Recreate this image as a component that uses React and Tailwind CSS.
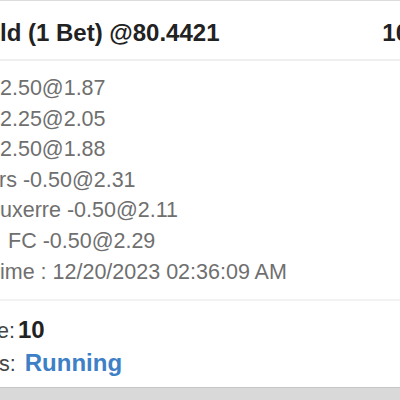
export default function App() {
  const lines = [
    { t: "2.50@1.87", ml: "ml-0" },
    { t: "2.25@2.05", ml: "ml-0" },
    { t: "2.50@1.88", ml: "ml-0" },
    { t: "rs -0.50@2.31", ml: "-ml-[1px]" },
    { t: "uxerre -0.50@2.11", ml: "ml-0" },
    { t: "FC -0.50@2.29", ml: "ml-[8px]" },
    { t: "ime : 12/20/2023 02:36:09 AM", ml: "ml-0" },
  ];
  return (
    <div
      className="w-[400px] h-[400px] overflow-hidden bg-[#d9d9d9]"
      style={{ fontFamily: '"Liberation Sans", Arial, sans-serif' }}
    >
      <div className="w-[417px] bg-white border-t border-[#dcdcdc] border-b border-b-[#c6c6c6]">
        <div className="h-[60px] pt-[6px] flex items-center justify-between pr-[8px] border-b-2 border-[#efefef]">
          <span className="text-[24px] font-bold text-[#222] whitespace-nowrap">ld (1 Bet) @80.4421</span>
          <span className="text-[24px] font-bold text-[#222]">10</span>
        </div>
        <div className="pt-[12px] pb-[12px] border-b-2 border-[#f2f2f2]">
          {lines.map((l, i) => (
            <div
              key={i}
              className={`text-[21.5px] leading-[30.6px] text-[#6f6f6f] whitespace-nowrap ${l.ml}`}
            >
              {l.t}
            </div>
          ))}
        </div>
        <div className="pt-[13px] pb-[7px] overflow-hidden">
          <div className="flex items-baseline leading-[31px] whitespace-nowrap">
            <span className="text-[21.5px] text-[#444] -ml-[3px]">e:</span>
            <span className="text-[24px] font-bold text-[#222] ml-[3px]">10</span>
          </div>
          <div className="flex items-baseline leading-[31px] whitespace-nowrap">
            <span className="text-[21.5px] text-[#444] -ml-[1px]">s:</span>
            <span className="text-[24px] font-bold text-[#3d80c6] ml-[9px]">Running</span>
          </div>
        </div>
      </div>
    </div>
  );
}
